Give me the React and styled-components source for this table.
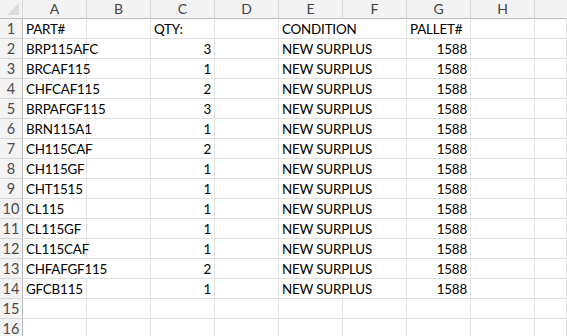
import React from "react";
import styled, { createGlobalStyle } from "styled-components";

const GlobalStyle = createGlobalStyle`
  html, body {
    margin: 0;
    padding: 0;
    background: #fff;
    overflow: hidden;
  }
  body {
    font-family: Lato, "Liberation Sans", sans-serif;
  }
`;

const Sheet = styled.div`
  display: grid;
  grid-template-columns: 23px repeat(8, 64px) 1fr;
  grid-auto-rows: 20px;
  grid-template-rows: 19px;
  width: 567px;
  height: 336px;
  overflow: hidden;
`;

const Corner = styled.div`
  position: relative;
  background: #f3f3f3;
  border-right: 1px solid #d6d6d6;
  border-bottom: 1px solid #bdbdbd;
  box-sizing: border-box;

  &::after {
    content: "";
    position: absolute;
    right: 3px;
    bottom: 3px;
    width: 0;
    height: 0;
    border-left: 12px solid transparent;
    border-bottom: 12px solid #dcdcdc;
  }
`;

const ColHead = styled.div`
  display: flex;
  align-items: center;
  justify-content: center;
  background: #f3f3f3;
  color: #444;
  font-size: 14px;
  border-right: 1px solid ${(p) => (p.$last ? "transparent" : "#d6d6d6")};
  border-bottom: 1px solid #bdbdbd;
  box-sizing: border-box;
  padding-bottom: 1px;
`;

const RowHead = styled.div`
  display: flex;
  align-items: center;
  justify-content: center;
  background: #f3f3f3;
  color: #4a4a4a;
  font-size: 14.5px;
  border-right: 1px solid #bdbdbd;
  border-bottom: 1px solid #d6d6d6;
  box-sizing: border-box;
`;

const Cell = styled.div`
  display: flex;
  align-items: center;
  justify-content: ${(p) => (p.$num ? "flex-end" : "flex-start")};
  padding: 1px 3px 0 3px;
  font-size: 13.4px;
  letter-spacing: -0.2px;
  color: #000;
  white-space: nowrap;
  overflow: visible;
  border-right: 1px solid ${(p) => (p.$spill ? "transparent" : "#e1e1e1")};
  border-bottom: 1px solid #e1e1e1;
  box-sizing: border-box;
  position: relative;
  z-index: ${(p) => (p.$spill ? 1 : 0)};
`;

const cols = ["A", "B", "C", "D", "E", "F", "G", "H", ""];

const data = [
  ["PART#", "QTY:", "CONDITION", "PALLET#"],
  ["BRP115AFC", 3, "NEW SURPLUS", 1588],
  ["BRCAF115", 1, "NEW SURPLUS", 1588],
  ["CHFCAF115", 2, "NEW SURPLUS", 1588],
  ["BRPAFGF115", 3, "NEW SURPLUS", 1588],
  ["BRN115A1", 1, "NEW SURPLUS", 1588],
  ["CH115CAF", 2, "NEW SURPLUS", 1588],
  ["CH115GF", 1, "NEW SURPLUS", 1588],
  ["CHT1515", 1, "NEW SURPLUS", 1588],
  ["CL115", 1, "NEW SURPLUS", 1588],
  ["CL115GF", 1, "NEW SURPLUS", 1588],
  ["CL115CAF", 1, "NEW SURPLUS", 1588],
  ["CHFAFGF115", 2, "NEW SURPLUS", 1588],
  ["GFCB115", 1, "NEW SURPLUS", 1588],
  [],
  [],
];

function rowCells(r) {
  const [part, qty, cond, pallet] = r;
  return [
    { v: part, spill: part && part.length > 9 },
    {},
    { v: qty, num: typeof qty === "number" },
    {},
    { v: cond, spill: !!cond },
    {},
    { v: pallet, num: typeof pallet === "number" },
    {},
    {},
  ];
}

export default function App() {
  return (
    <>
      <GlobalStyle />
      <Sheet>
        <Corner />
        {cols.map((c, i) => (
          <ColHead key={i} $last={i === cols.length - 1}>
            {c}
          </ColHead>
        ))}
        {data.map((r, ri) => (
          <React.Fragment key={ri}>
            <RowHead>{ri + 1}</RowHead>
            {rowCells(r).map((c, ci) => (
              <Cell key={ci} $num={c.num} $spill={c.spill}>
                {c.v}
              </Cell>
            ))}
          </React.Fragment>
        ))}
      </Sheet>
    </>
  );
}
